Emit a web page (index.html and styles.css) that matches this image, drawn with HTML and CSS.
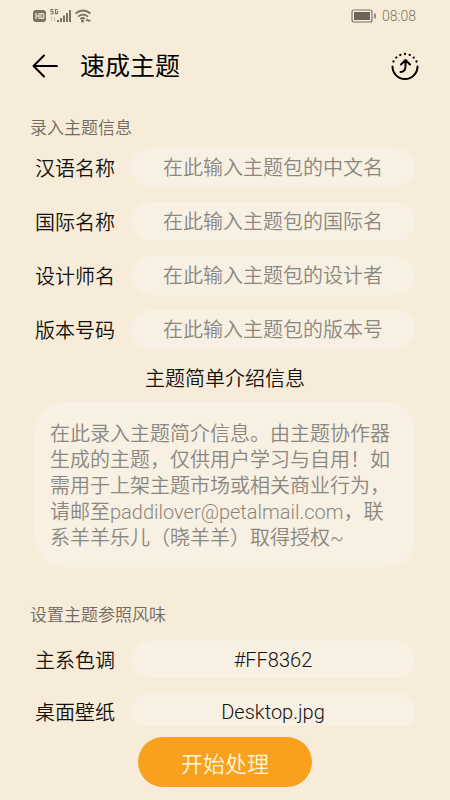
FILE: index.html
```html
<!DOCTYPE html>
<html lang="zh-CN">
<head>
  <meta charset="utf-8">
  <meta name="viewport" content="width=device-width, initial-scale=1">
  <title>速成主题</title>
  <link rel="stylesheet" href="styles.css">
</head>
<body>

<div class="status">
  <svg width="60" height="16" viewBox="0 0 60 16">
    <rect x="0" y="2" width="13" height="12" rx="3" fill="#7a7264"/>
    <path d="M3 5v6M6 5v6M3 8h3M8 5.500v5h1q2 0 2-2.500t-2-2.500z" fill="none" stroke="#f7ecd9" stroke-width="1.200"/>
    <path d="M20.500 1.500h-2.500v2h2v2.200h-2.500M24.500 1.500h-2v4.200h2v-2h-1" fill="none" stroke="#7a7264" stroke-width="1.100"/>
    <path d="M18.500 9v4M17.500 10l1-1M21.500 9v4M22.500 12l-1 1" fill="none" stroke="#c9bfae" stroke-width="1"/>
    <path d="M24 12h2v2h-2zM27 10h2v4h-2zM30 7.500h2v6.500h-2zM33 5h2v9h-2zM36 2h2v12h-2z" fill="#7a7264"/>
    <path d="M42.500 5.500q7.500-6 15 0M45 8.700q5-4 10 0M47.300 11q2.700-2 4.500 0" fill="none" stroke="#7a7264" stroke-width="1.700"/>
    <circle cx="49.500" cy="13" r="1.500" fill="#7a7264"/>
    <path d="M53 13l1.500-1.500 1.500 1.500 1.500-1" fill="none" stroke="#7a7264" stroke-width="1.500"/>
  </svg>
  <div class="status-right">
    <svg width="26" height="14" viewBox="0 0 26 14">
      <rect x="1" y="1" width="20" height="12" rx="2" fill="none" stroke="#7a7264" stroke-width="1.200"/>
      <rect x="3" y="3" width="16" height="8" fill="#6e6558"/>
      <path d="M24 4.500v5" stroke="#7a7264" stroke-width="1.500"/>
    </svg>
    <span>08:08</span>
  </div>
</div>

<header>
  <button class="icon" aria-label="返回">
    <svg width="26" height="24" viewBox="0 0 26 24" fill="none" stroke="#000" stroke-width="2" stroke-linecap="round" stroke-linejoin="round">
      <path d="M12 1.500L1.500 12 12 22.500M1.500 12H25"/>
    </svg>
  </button>
  <h1>速成主题</h1>
  <button class="icon" aria-label="导出">
    <svg width="28" height="28" viewBox="0 0 28 28" fill="none" stroke="#000" stroke-width="2" stroke-linecap="round" stroke-linejoin="round">
      <path d="M1.500 14.500a12.500 12.500 0 0 0 25 0"/>
      <path d="M9.500 20q5 0 5-6V8M10 12.500L14.500 8l4.500 4.500"/>
      <path d="M2.500 9.500h0M5.300 5.600h0M9.300 2.900h0M14 2h0M18.700 2.900h0M22.700 5.600h0M25.500 9.500h0" stroke-width="2.300"/>
    </svg>
  </button>
</header>

<main>
  <h2>录入主题信息</h2>
  <div class="row">
    <label for="name">汉语名称</label>
    <input id="name" placeholder="在此输入主题包的中文名">
  </div>
  <div class="row">
    <label for="intl">国际名称</label>
    <input id="intl" placeholder="在此输入主题包的国际名">
  </div>
  <div class="row">
    <label for="designer">设计师名</label>
    <input id="designer" placeholder="在此输入主题包的设计者">
  </div>
  <div class="row">
    <label for="version">版本号码</label>
    <input id="version" placeholder="在此输入主题包的版本号">
  </div>

  <label class="intro" for="intro">主题简单介绍信息</label>
  <textarea id="intro" placeholder="在此录入主题简介信息。由主题协作器生成的主题，仅供用户学习与自用！如需用于上架主题市场或相关商业行为，请邮至paddilover@petalmail.com，联系羊羊乐儿（晓羊羊）取得授权~"></textarea>

  <h2 class="flavor">设置主题参照风味</h2>
  <div class="row small">
    <label for="color">主系色调</label>
    <input id="color" value="#FF8362">
  </div>
  <div class="row small">
    <label for="wallpaper">桌面壁纸</label>
    <input id="wallpaper" value="Desktop.jpg">
  </div>
</main>

<footer>
  <button class="start">开始处理</button>
</footer>

</body>
</html>
```

FILE: styles.css
```css
* {
  box-sizing: border-box;
}
body {
  margin: 0;
  height: 100vh;
  display: flex;
  flex-direction: column;
  background: #f7ecd9;
  color: #14120e;
  font-family: Roboto, "Noto Sans CJK SC", sans-serif;
  font-weight: 350;
  font-size: 20px;
}
input, textarea, button {
  font: inherit;
  color: inherit;
  border: 0;
  outline: 0;
}
.status {
  display: flex;
  justify-content: space-between;
  align-items: center;
  height: 32px;
  padding: 0 34px 0 33px;
}
.status svg {
  display: block;
}
.status-right {
  display: flex;
  align-items: center;
  gap: 5px;
  color: #7a7264;
  font-size: 14px;
  line-height: 20px;
}
header {
  display: flex;
  align-items: center;
  height: 68px;
  padding: 0 31px 0 32px;
}
h1 {
  flex: 1;
  margin: 0 0 0 22px;
  padding-top: 2px;
  font-size: 25px;
  font-weight: 400;
  line-height: 36px;
  color: #000;
}
.icon {
  padding: 0;
  background: none;
}
.icon svg {
  display: block;
}
main {
  flex: 1;
  min-height: 0;
  overflow-y: auto;
  scrollbar-width: none;
  padding: 14px 35px 0;
}
h2 {
  margin: 0 0 6px -5px;
  font-size: 17px;
  font-weight: 350;
  line-height: 28px;
  color: #6f695f;
}
h2.flavor {
  margin-bottom: 12px;
}
.row {
  display: flex;
  align-items: center;
  gap: 16px;
  margin-bottom: 15px;
}
.row input {
  flex: 1;
  min-width: 0;
  height: 39px;
  padding: 0 16px;
  border-radius: 20px;
  text-align: center;
}
.row.small input {
  height: 37px;
}
input, textarea {
  background: #f8f0e3;
}
::placeholder {
  color: #8a877e;
  opacity: 1;
}
.intro {
  display: block;
  line-height: 30px;
  text-align: center;
}
textarea {
  display: block;
  width: 100%;
  height: 165px;
  margin: 8px 0 34px;
  padding: 19px 15px 15px;
  border-radius: 28px;
  line-height: 26px;
  resize: none;
}
footer {
  padding: 11px 0 13px;
  text-align: center;
}
.start {
  display: block;
  height: 50px;
  margin: 0 auto;
  padding: 0 43px;
  border-radius: 25px;
  background: #f9a11f;
  color: #fff6dc;
  font-size: 22px;
}
```
